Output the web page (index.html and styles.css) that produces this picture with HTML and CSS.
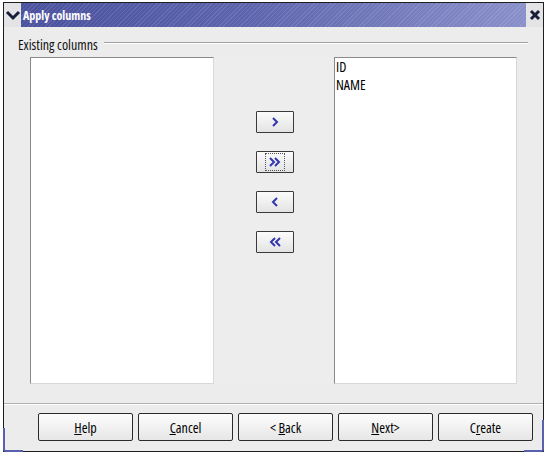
FILE: index.html
```html
<!DOCTYPE html>
<html>
<head>
<meta charset="utf-8">
<link rel="stylesheet" href="styles.css">
</head>
<body>
<div class="window">
  <div class="titlebar">
    <div class="tb-icon">
      <svg width="16" height="16" viewBox="0 0 16 16"><path d="M2 5 L8 11 L14 5" fill="none" stroke="#1a1d3a" stroke-width="3"/></svg>
    </div>
    <div class="tb-title">Apply columns</div>
    <div class="tb-close">
      <svg width="16" height="16" viewBox="0 0 16 16"><path d="M4 4 L12 12 M12 4 L4 12" fill="none" stroke="#1a1d3a" stroke-width="3"/></svg>
    </div>
  </div>
  <div class="body">
    <div class="group-head">
      <span class="group-label">Existing columns</span>
      <span class="group-line"></span>
    </div>
    <div class="lists">
      <div class="listbox left"></div>
      <div class="movers">
        <button class="mv"><svg width="10" height="12" viewBox="0 0 10 12"><path d="M3 2 L7 6 L3 10" fill="none" stroke="#3535b0" stroke-width="2"/></svg></button>
        <button class="mv focus"><span class="focusring"><svg width="14" height="12" viewBox="0 0 14 12"><path d="M2 2 L6 6 L2 10 M7 2 L11 6 L7 10" fill="none" stroke="#3535b0" stroke-width="2"/></svg></span></button>
        <button class="mv"><svg width="10" height="12" viewBox="0 0 10 12"><path d="M7 2 L3 6 L7 10" fill="none" stroke="#3535b0" stroke-width="2"/></svg></button>
        <button class="mv"><svg width="14" height="12" viewBox="0 0 14 12"><path d="M7 2 L3 6 L7 10 M12 2 L8 6 L12 10" fill="none" stroke="#3535b0" stroke-width="2"/></svg></button>
      </div>
      <div class="listbox right">
        <div class="item">ID</div>
        <div class="item">NAME</div>
      </div>
    </div>
    <div class="separator"></div>
    <div class="buttons">
      <button class="btn"><u>H</u>elp</button>
      <button class="btn"><u>C</u>ancel</button>
      <button class="btn">&lt; <u>B</u>ack</button>
      <button class="btn"><u>N</u>ext&gt;</button>
      <button class="btn">C<u>r</u>eate</button>
    </div>
  </div>
  <span class="corner cl"></span>
  <span class="corner cr"></span>
</div>
</body>
</html>
```
FILE: styles.css
```css
* { box-sizing: border-box; }
html, body { margin: 0; padding: 0; background: #ffffff; }
body {
  font-family: "Open Sans", "Liberation Sans", sans-serif;
  font-stretch: 80%;
  font-size: 14px;
  color: #000;
}
.window {
  position: relative;
  margin: 2px 0 0 3px;
  width: 541px;
  height: 450px;
  border: 1px solid #1e1e1e;
  background: #ececec;
  display: flex;
  flex-direction: column;
}
.titlebar {
  height: 24px;
  display: flex;
  align-items: center;
  background:
    repeating-linear-gradient(135deg, rgba(255,255,255,0.10) 0 1px, rgba(0,0,0,0) 1px 3px),
    linear-gradient(90deg, #484f9c 0%, #5d64ad 45%, #8c92cb 100%);
}
.tb-icon, .tb-close {
  width: 17px;
  height: 24px;
  background: #e4e4e6;
  display: flex;
  align-items: center;
  justify-content: center;
}
.tb-title {
  flex: 1;
  color: #ffffff;
  font-weight: bold;
  font-size: 12px;
  font-stretch: 75%;
  padding-left: 2px;
  padding-top: 1px;
}
.body {
  flex: 1;
  display: flex;
  flex-direction: column;
}
.group-head {
  display: flex;
  align-items: center;
  margin: 9px 15px 0 14px;
  height: 17px;
}
.group-label {
  color: #111;
  padding-right: 6px;
  line-height: 17px;
}
.group-line {
  flex: 1;
  height: 2px;
  border-top: 1px solid #a0a0a0;
  border-bottom: 1px solid #ffffff;
  margin-top: -3px;
}
.lists {
  display: flex;
  margin: 4px 0 0 26px;
  height: 327px;
}
.listbox {
  background: #ffffff;
  border-top: 1px solid #8a8a8a;
  border-left: 1px solid #8a8a8a;
  border-right: 1px solid #d8d8d8;
  border-bottom: 1px solid #d8d8d8;
  height: 327px;
}
.listbox.left { width: 184px; }
.listbox.right { width: 183px; padding: 0 0 0 1px; }
.item { line-height: 18px; height: 18px; }
.movers {
  width: 120px;
  padding-left: 42px;
  padding-top: 54px;
  display: flex;
  flex-direction: column;
  gap: 18px;
  background: #ededed;
}
.mv {
  width: 38px;
  height: 22px;
  padding: 0;
  margin: 0;
  border: 1px solid #3a3a3a;
  border-radius: 1px;
  background: linear-gradient(#fbfbfb, #e3e3e3);
  display: flex;
  align-items: center;
  justify-content: center;
}
.focusring {
  display: flex;
  align-items: center;
  justify-content: center;
  width: 20px;
  height: 18px;
  border: 1px dotted #555;
}
.separator {
  margin-top: 19px;
  height: 2px;
  border-top: 1px solid #b0b0b0;
  border-bottom: 1px solid #ffffff;
}
.buttons {
  display: flex;
  gap: 5px;
  margin: 8px 0 0 34px;
}
.btn {
  width: 95px;
  height: 28px;
  padding: 0;
  border: 1px solid #2a2a2a;
  border-radius: 2px;
  background: linear-gradient(#fdfdfd, #e6e6e6);
  font-family: inherit;
  font-stretch: 80%;
  font-size: 14px;
  color: #000;
}
.corner {
  position: absolute;
  bottom: -1px;
  width: 20px;
  height: 24px;
  border-bottom: 2px solid #5a60b0;
}
.corner.cl { left: -1px; border-left: 2px solid #5a60b0; border-bottom-left-radius: 3px; }
.corner.cr { right: -1px; border-right: 2px solid #5a60b0; border-bottom-right-radius: 3px; height: 32px; }
```
